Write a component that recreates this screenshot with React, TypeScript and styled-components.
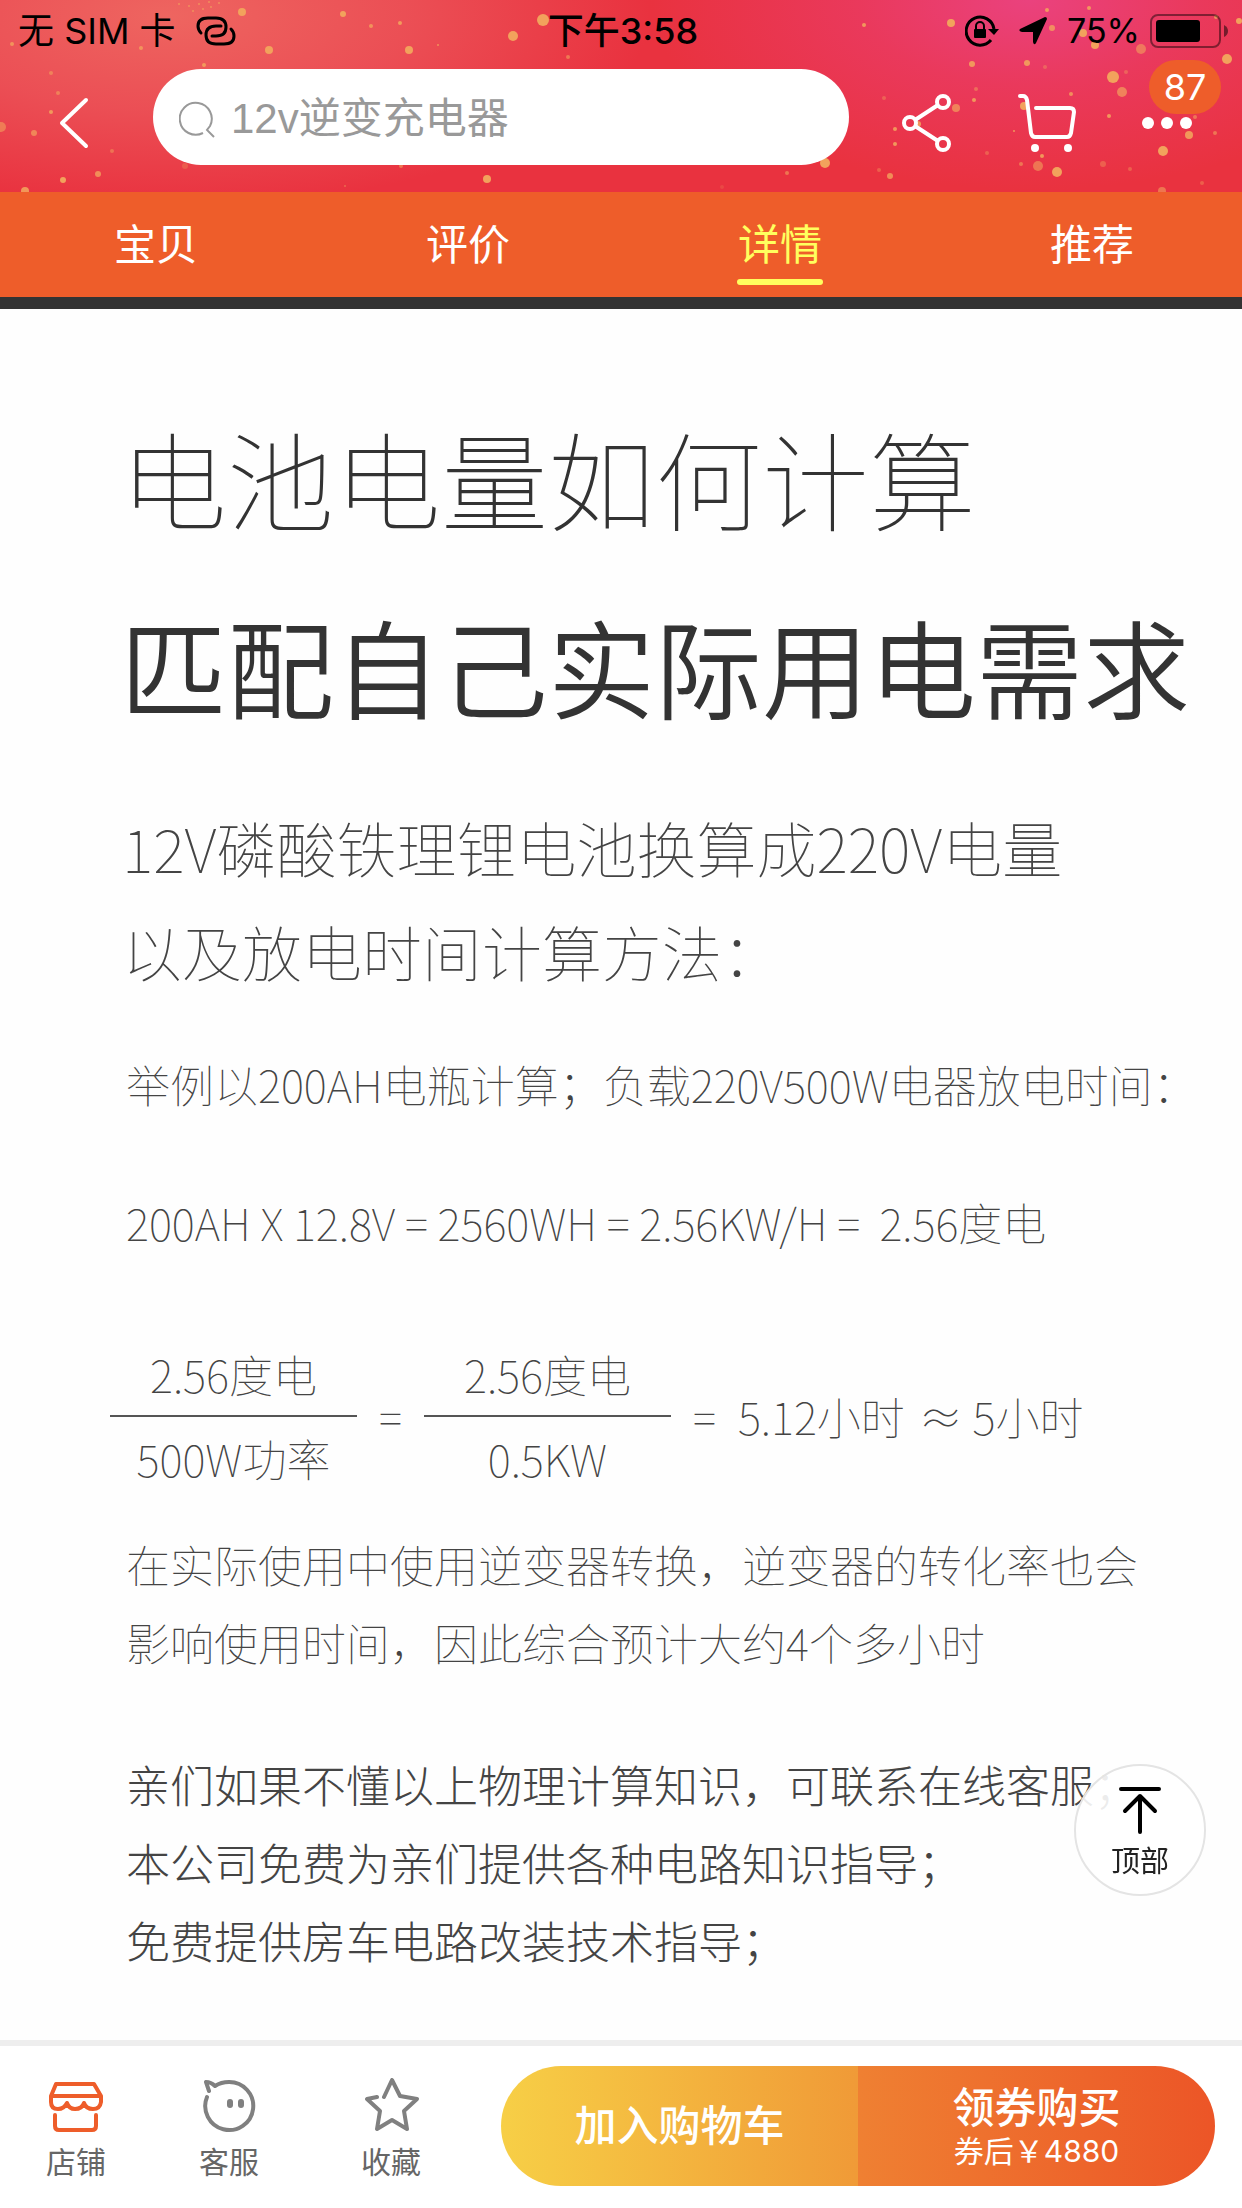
import React from "react";
import styled, { createGlobalStyle } from "styled-components";

const cjk = `"Noto Sans CJK SC", sans-serif`;
const ui = `Inter, "Noto Sans CJK SC", sans-serif`;

const Global = createGlobalStyle`
  *, *::before, *::after { box-sizing: border-box; }
  body { margin: 0; background: #fff; font-family: ${ui}; }
  button { border: 0; padding: 0; background: none; font: inherit; color: inherit; cursor: pointer; }
  h1, h2, p { margin: 0; font-weight: inherit; }
  svg { display: block; }
`;

const Page = styled.div`
  display: flex;
  flex-direction: column;
  min-height: 100vh;
`;

const Header = styled.header`
  position: relative;
  overflow: hidden;
  height: 192px;
  background:
    radial-gradient(ellipse 480px 190px at 170px 16px, #ee6560 0%, rgba(236, 88, 92, 0.75) 50%, rgba(233, 50, 63, 0) 100%),
    radial-gradient(ellipse 380px 190px at 1030px 0, #ea427e 0%, rgba(234, 60, 104, 0.7) 45%, rgba(233, 50, 63, 0) 100%),
    #e9323f;
`;

const Confetti = styled.svg`
  position: absolute;
  inset: 0;
  width: 100%;
  height: 100%;
`;

const StatusBar = styled.div`
  position: relative;
  display: grid;
  grid-template-columns: 1fr auto 1fr;
  align-items: center;
  height: 62px;
  padding: 0 14px 0 18px;
  color: #000;
  font-size: 36px;
  line-height: 40px;
`;

const StatusGroup = styled.div<{ $end?: boolean }>`
  display: flex;
  align-items: center;
  justify-content: ${(p) => (p.$end ? "flex-end" : "flex-start")};
  gap: ${(p) => (p.$end ? "10px" : "20px")};
`;

const Clock = styled.span`
  font-weight: 500;
`;

const Charge = styled.span`
  font-size: 34px;
`;

const Arrow = styled.span`
  padding: 0 10px;
`;

const NavRow = styled.div`
  position: relative;
  display: flex;
  align-items: flex-start;
  padding: 7px 27px 0 0;
`;

const NavButton = styled.button<{ $w: number; $shift?: string }>`
  position: relative;
  display: flex;
  flex: none;
  align-items: center;
  justify-content: center;
  width: ${(p) => p.$w}px;
  height: 108px;
  padding: ${(p) => p.$shift ?? "0"};
  color: #fff;
`;

const Search = styled.label`
  display: flex;
  flex: 1;
  align-items: center;
  gap: 14px;
  min-width: 0;
  height: 96px;
  padding: 4px 24px 0 26px;
  border-radius: 48px;
  background: #fff;
  color: #999;
`;

const SearchInput = styled.input`
  flex: 1;
  min-width: 0;
  border: 0;
  outline: 0;
  padding: 0;
  background: none;
  color: #999;
  font-family: "Liberation Sans", "Noto Sans CJK SC", sans-serif;
  font-size: 42px;
  line-height: 60px;
`;

const Badge = styled.span`
  position: absolute;
  top: -9px;
  right: -6px;
  width: 72px;
  border-radius: 27px;
  background: #ee5d2a;
  font-size: 36px;
  line-height: 54px;
  text-align: center;
`;

const Tabs = styled.nav`
  display: flex;
  justify-content: space-between;
  height: 105px;
  padding: 0 107px 0 113px;
  background: #ee5d2a;
`;

const Tab = styled.button<{ $active?: boolean }>`
  display: flex;
  flex-direction: column;
  align-items: center;
  justify-content: flex-end;
  gap: 7px;
  width: 86px;
  padding-bottom: 12px;
  color: ${(p) => (p.$active ? "#ffff5e" : "#fff")};
  font-family: ${cjk};
  font-size: 42px;
  line-height: 60px;

  &::after {
    content: "";
    width: 100%;
    height: 6px;
    border-radius: 3px;
    background: ${(p) => (p.$active ? "#ffff5e" : "transparent")};
  }
`;

const Article = styled.main`
  flex: 1;
  padding: 98px 0 60px 126px;
  border-top: 12px solid #333;
  background: #fefefe;
  color: #444;
  font-family: ${cjk};
  font-weight: 100;
  font-size: 44px;
  line-height: 78px;
  white-space: nowrap;
`;

const Title = styled.h1<{ $strong?: boolean }>`
  margin: 0 0 48px -6px;
  color: #333;
  font-size: 107px;
  line-height: 140px;
  font-weight: ${(p) => (p.$strong ? 350 : 100)};
`;

const Lead = styled.p`
  margin: 60px 0 42px -4px;
  font-size: 60px;
  line-height: 104px;
`;

const Text = styled.p<{ $gap: number; $weight?: number }>`
  margin-bottom: ${(p) => p.$gap}px;
  font-weight: ${(p) => p.$weight ?? 100};
`;

const Equation = styled.div`
  display: flex;
  align-items: center;
  gap: 22px;
  margin: 0 0 26px -16px;
`;

const Fraction = styled.div`
  width: 247px;
  text-align: center;
`;

const Part = styled.div<{ $top?: boolean }>`
  line-height: 82px;
  border-bottom: ${(p) => (p.$top ? "2px solid #555" : "0")};
`;

const Result = styled.div`
  display: flex;
  gap: 14px;
`;

const ToTop = styled.button`
  position: fixed;
  right: 36px;
  bottom: 312px;
  display: flex;
  flex-direction: column;
  align-items: center;
  width: 132px;
  height: 132px;
  padding-top: 20px;
  border: 2px solid #e4e4e4;
  border-radius: 50%;
  background: rgba(255, 255, 255, 0.9);
  color: #222;
  font-family: ${cjk};
  font-size: 29px;
  line-height: 46px;
`;

const BottomBar = styled.footer`
  display: flex;
  align-items: center;
  height: 168px;
  padding: 0 27px 2px 0;
  border-top: 6px solid #eee;
  background: #fff;
`;

const Shortcuts = styled.div`
  display: flex;
  flex: none;
  width: 501px;
  padding-top: 8px;
`;

const Shortcut = styled.button<{ $w: number }>`
  display: flex;
  flex-direction: column;
  align-items: center;
  gap: 4px;
  width: ${(p) => p.$w}px;
  color: #666;
  font-family: ${cjk};
  font-size: 30px;
  line-height: 44px;
`;

const Actions = styled.div`
  display: flex;
  flex: 1;
  height: 120px;
  border-radius: 60px;
  overflow: hidden;
`;

const Action = styled.button<{ $buy?: boolean }>`
  display: flex;
  flex: 1;
  flex-direction: column;
  align-items: center;
  justify-content: center;
  background: ${(p) =>
    p.$buy ? "linear-gradient(90deg, #ef8032, #ec5527)" : "linear-gradient(90deg, #f7cf46, #f09a37)"};
  color: #fff;
  font-family: ${ui};
  font-size: 42px;
  font-weight: 500;
  line-height: 50px;
`;

const Price = styled.span`
  font-size: 30px;
  font-weight: 400;
  line-height: 36px;
`;

// x, y, radius, opacity of every gold fleck in the festive header
const flecks: [number, number, number, number][] = [
  [242, 12, 4, 1], [269, 50, 4, 1], [343, 14, 3, 1], [371, 26, 2, 0.8], [400, 23, 2, 0.9], [409, 50, 4, 1],
  [438, 45, 1, 0.8], [513, 36, 5, 1], [543, 20, 6, 1], [568, 57, 2, 0.6], [204, 65, 2, 0.9], [141, 48, 2, 0.8],
  [12, 44, 2, 0.8], [51, 73, 2, 0.6], [58, 93, 2, 0.6], [51, 112, 2, 0.9], [34, 133, 3, 0.7], [1, 127, 5, 0.6],
  [112, 151, 2, 0.5], [98, 174, 3, 0.8], [63, 180, 3, 1], [25, 191, 4, 0.9], [185, 166, 3, 0.3], [401, 166, 2, 0.6],
  [487, 179, 4, 1], [345, 186, 1, 0.5], [864, 25, 2, 0.9], [951, 23, 4, 1], [1047, 10, 2, 0.9], [1089, 8, 2, 0.9],
  [1052, 28, 3, 0.8], [1083, 33, 4, 1], [1095, 45, 4, 1], [1141, 49, 5, 0.6], [1216, 17, 2, 0.8], [1239, 21, 3, 1],
  [1227, 59, 5, 1], [972, 64, 3, 0.9], [1027, 63, 3, 0.9], [1045, 67, 2, 0.4], [1113, 77, 6, 1], [1122, 92, 5, 0.7],
  [1126, 72, 2, 0.4], [976, 89, 2, 0.5], [974, 100, 2, 0.9], [956, 108, 4, 0.7], [884, 98, 2, 0.4], [1071, 94, 2, 0.8],
  [1024, 106, 4, 1], [1109, 116, 2, 0.9], [895, 129, 2, 0.9], [895, 144, 2, 0.9], [918, 124, 3, 0.9], [1014, 131, 1, 0.9],
  [1189, 135, 4, 0.9], [1195, 117, 2, 0.6], [1215, 133, 2, 0.6], [1163, 151, 5, 1], [1042, 156, 2, 0.9], [1038, 166, 5, 0.6],
  [1057, 172, 5, 1], [1021, 164, 2, 0.6], [1103, 164, 3, 0.4], [1130, 169, 2, 0.4], [987, 153, 2, 0.4], [825, 163, 5, 1],
  [787, 173, 2, 0.6], [890, 176, 3, 0.8], [879, 170, 2, 0.4], [1162, 191, 4, 0.6], [1202, 183, 2, 0.4], [722, 187, 2, 0.2],
  [179, 4, 1, 0.7], [189, 6, 1, 0.7], [199, 4, 1, 0.7], [209, 2, 1, 0.7], [219, 3, 1, 0.7], [193, 11, 1, 0.7],
  [203, 9, 1, 0.7], [211, 7, 1, 0.7],
];

const App = () => (
  <Page>
    <Global />
    <Header>
      <Confetti aria-hidden="true">
        {flecks.map(([x, y, r, o]) => (
          <circle key={`${x}-${y}`} cx={x} cy={y} r={r} fill="#f2a25c" opacity={o} />
        ))}
      </Confetti>
      <StatusBar>
        <StatusGroup>
          <span>无 SIM 卡</span>
          <svg width="40" height="30" viewBox="0 0 40 30" fill="none" stroke="#000" strokeWidth="3" strokeLinecap="round">
            <path d="M5 17Q2 14 2 10Q2 2 12 2H20Q30 2 30 11Q30 20 20 20H16" />
            <path d="M35 13Q38 16 38 20Q38 28 28 28H20Q10 28 10 19Q10 10 20 10H25" />
          </svg>
        </StatusGroup>
        <Clock>下午3:58</Clock>
        <StatusGroup $end>
          <svg width="34" height="32" viewBox="0 0 34 32" fill="none" stroke="#000" strokeWidth="3">
            <path d="M26 25A14 14 0 1 1 29 14" />
            <path d="M23 14H34L29 20Z" fill="#000" stroke="none" />
            <rect x="9" y="14" width="12" height="9" rx="1" fill="#000" stroke="none" />
            <path d="M11 15V11A4 4 0 0 1 19 11V15" strokeWidth="2" />
          </svg>
          <Arrow>
            <svg width="28" height="28" viewBox="0 0 28 28">
              <path d="M26 0Q28 0 28 2L17 26Q15 29 14 25V15H3Q-1 14 1 12Z" fill="#000" />
            </svg>
          </Arrow>
          <Charge>75%</Charge>
          <svg width="78" height="34" viewBox="0 0 78 34">
            <rect x="1" y="1" width="69" height="32" rx="7" fill="none" stroke="#000" strokeOpacity="0.45" strokeWidth="2" />
            <rect x="6" y="6" width="44" height="22" rx="3" fill="#000" />
            <path d="M74 11Q78 13 78 17T74 23Z" fill="#000" fillOpacity="0.5" />
          </svg>
        </StatusGroup>
      </StatusBar>
      <NavRow>
        <NavButton $w={153} $shift="0 6px 0 0" aria-label="返回">
          <svg width="30" height="52" viewBox="0 0 30 52" fill="none" stroke="#fff" strokeWidth="4" strokeLinecap="round" strokeLinejoin="round">
            <path d="M27 3L3 26L27 49" />
          </svg>
        </NavButton>
        <Search>
          <svg width="38" height="38" viewBox="0 0 38 38" fill="none" stroke="#999" strokeWidth="2">
            <path d="M24 33A16 16 0 1 1 31 26L28 30L35 37" />
          </svg>
          <SearchInput aria-label="搜索" defaultValue="12v逆变充电器" />
        </Search>
        <NavButton $w={156} aria-label="分享">
          <svg width="52" height="60" viewBox="0 0 52 60" fill="none" stroke="#fff" strokeWidth="4">
            <circle cx="9" cy="30" r="6" />
            <circle cx="42" cy="9" r="6" />
            <circle cx="42" cy="51" r="6" />
            <path d="M14 27L37 12M14 33L37 48" />
          </svg>
        </NavButton>
        <NavButton $w={84} aria-label="购物车">
          <svg width="60" height="60" viewBox="0 0 60 60" fill="none" stroke="#fff" strokeWidth="4" strokeLinecap="round" strokeLinejoin="round">
            <path d="M3 3H6Q9 3 10 7L14 40Q15 44 18 44H50Q53 44 54 40L57 19Q57 15 53 15H19" />
            <circle cx="18" cy="55" r="4" fill="#fff" stroke="none" />
            <circle cx="51" cy="55" r="4" fill="#fff" stroke="none" />
          </svg>
        </NavButton>
        <NavButton $w={126} $shift="0 0 0 30px" aria-label="更多">
          <svg width="50" height="12" viewBox="0 0 50 12" fill="#fff">
            <circle cx="6" cy="6" r="6" />
            <circle cx="25" cy="6" r="6" />
            <circle cx="44" cy="6" r="6" />
          </svg>
          <Badge>87</Badge>
        </NavButton>
      </NavRow>
    </Header>
    <Tabs>
      <Tab>宝贝</Tab>
      <Tab>评价</Tab>
      <Tab $active>详情</Tab>
      <Tab>推荐</Tab>
    </Tabs>
    <Article>
      <Title>电池电量如何计算</Title>
      <Title as="h2" $strong>匹配自己实际用电需求</Title>
      <Lead>
        12V磷酸铁理锂电池换算成220V电量
        <br />
        以及放电时间计算方法：
      </Lead>
      <Text $gap={60}>举例以200AH电瓶计算；负载220V500W电器放电时间：</Text>
      <Text $gap={72}>200AH X 12.8V = 2560WH = 2.56KW/H =&nbsp; 2.56度电</Text>
      <Equation>
        <Fraction>
          <Part $top>2.56度电</Part>
          <Part>500W功率</Part>
        </Fraction>
        <span>=</span>
        <Fraction>
          <Part $top>2.56度电</Part>
          <Part>0.5KW</Part>
        </Fraction>
        <span>=</span>
        <Result>
          <span>5.12小时</span>
          <span>≈ 5小时</span>
        </Result>
      </Equation>
      <Text $gap={64}>
        在实际使用中使用逆变器转换，逆变器的转化率也会
        <br />
        影响使用时间，因此综合预计大约4个多小时
      </Text>
      <Text $gap={0} $weight={300}>
        亲们如果不懂以上物理计算知识，可联系在线客服；
        <br />
        本公司免费为亲们提供各种电路知识指导；
        <br />
        免费提供房车电路改装技术指导；
      </Text>
    </Article>
    <ToTop>
      <svg width="44" height="50" viewBox="0 0 44 50" fill="none" stroke="#000" strokeWidth="4" strokeLinecap="round" strokeLinejoin="round">
        <path d="M3 3H41M22 46V10M7 25L22 10L37 25" />
      </svg>
      顶部
    </ToTop>
    <BottomBar>
      <Shortcuts>
        <Shortcut $w={152}>
          <svg width="56" height="56" viewBox="0 0 56 56" fill="none" stroke="#ee5d2a" strokeWidth="4" strokeLinecap="round" strokeLinejoin="round">
            <path d="M8 6H46L53 18V24Q52 31 45 31Q38 31 36 25Q34 31 27 31Q21 31 19 25Q16 31 10 31Q3 31 3 24V18ZM3 18H53" />
            <path d="M7 37V48Q7 52 11 52H44Q48 52 48 48V37" />
          </svg>
          店铺
        </Shortcut>
        <Shortcut $w={154}>
          <svg width="56" height="56" viewBox="0 0 56 56" fill="none" stroke="#808080" strokeWidth="4" strokeLinecap="round" strokeLinejoin="round">
            <path d="M8 13L5 4Q10 4 14 8Q20 4 28 4A24 24 0 1 1 6 19" />
            <rect x="26" y="21" width="6" height="9" rx="3" fill="#808080" stroke="none" />
            <rect x="37" y="21" width="6" height="9" rx="3" fill="#808080" stroke="none" />
          </svg>
          客服
        </Shortcut>
        <Shortcut $w={170}>
          <svg width="56" height="56" viewBox="0 0 56 56" fill="none" stroke="#808080" strokeWidth="4" strokeLinecap="round" strokeLinejoin="round">
            <path d="M21 19L29 2L37 18L54 21L41 33L44 51L29 42L14 51L17 33L4 21L14 19" />
          </svg>
          收藏
        </Shortcut>
      </Shortcuts>
      <Actions>
        <Action>加入购物车</Action>
        <Action $buy>
          领券购买
          <Price>券后￥4880</Price>
        </Action>
      </Actions>
    </BottomBar>
  </Page>
);

export default App;
